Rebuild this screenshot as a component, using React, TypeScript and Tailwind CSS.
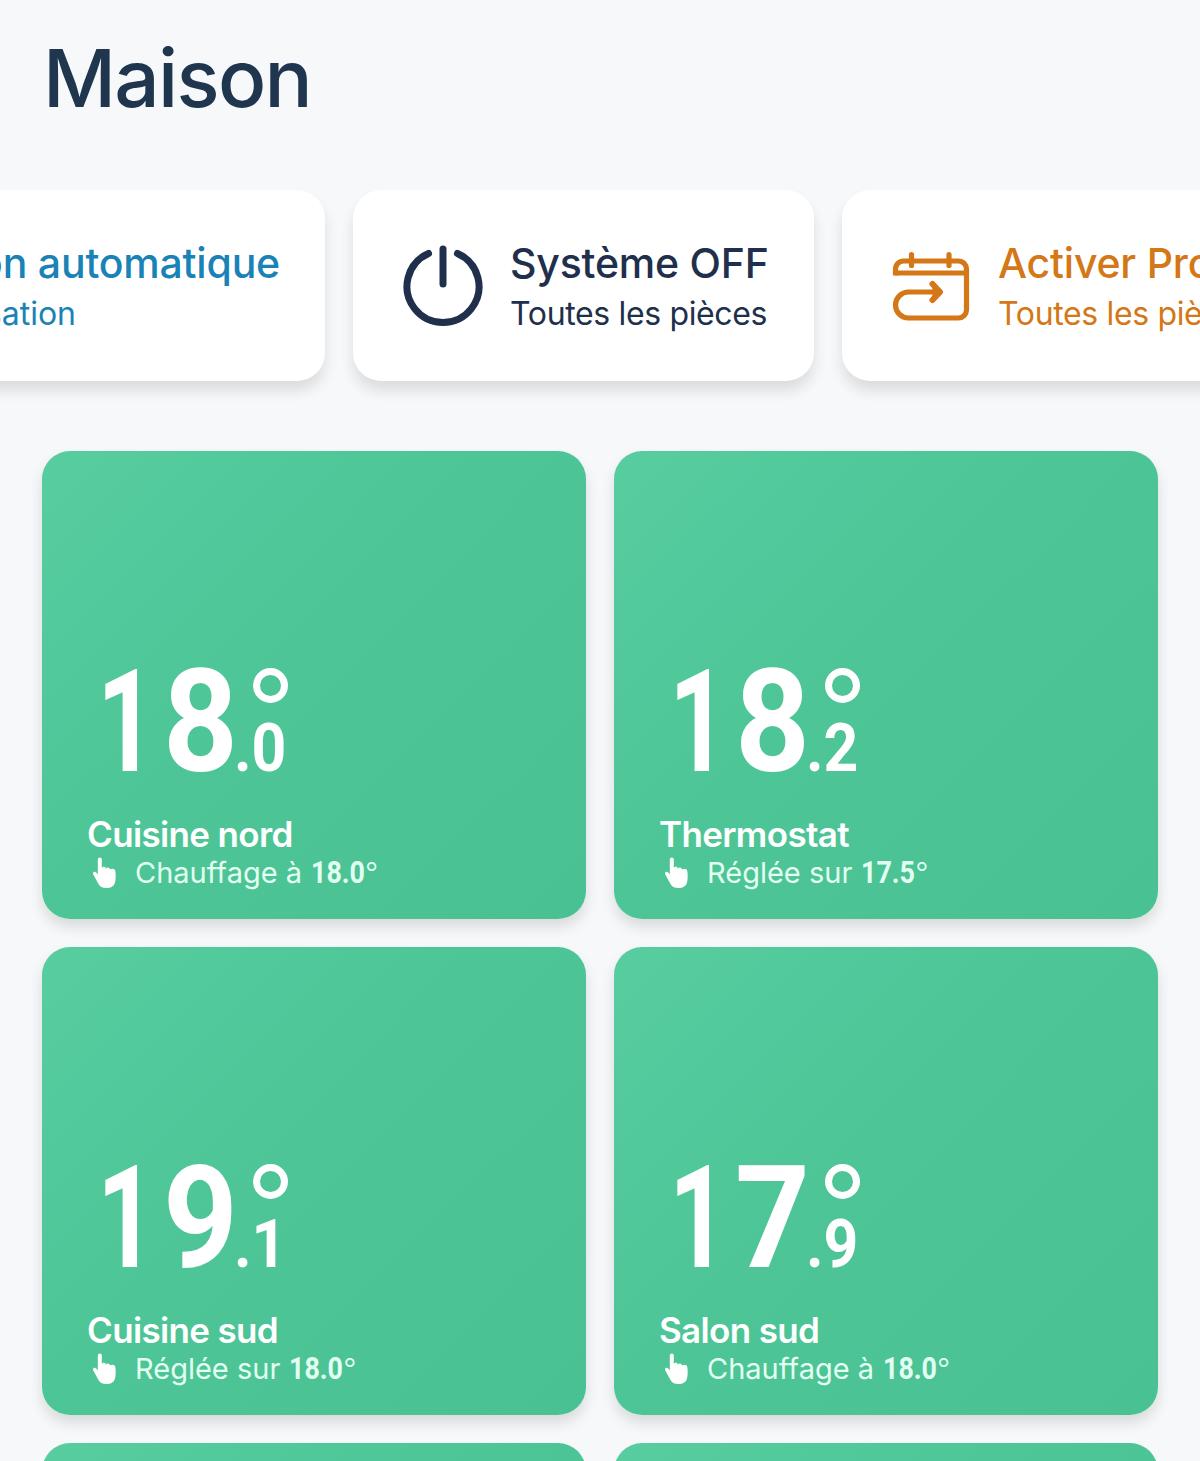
import type { ReactNode } from "react";

interface Room {
  name: string;
  whole: string;
  tenth: string;
  status: string;
  target: string;
}

const rooms: Room[] = [
  { name: "Cuisine nord", whole: "18", tenth: "0", status: "Chauffage à", target: "18.0" },
  { name: "Thermostat", whole: "18", tenth: "2", status: "Réglée sur", target: "17.5" },
  { name: "Cuisine sud", whole: "19", tenth: "1", status: "Réglée sur", target: "18.0" },
  { name: "Salon sud", whole: "17", tenth: "9", status: "Chauffage à", target: "18.0" },
];

const tile = "h-[468px] rounded-[28px] bg-linear-[135deg] from-[#57cda0] via-[#4dc597] via-45% to-[#49c193]";

function PowerIcon() {
  return (
    <svg width="80" height="82" viewBox="0 0 80 82" fill="none" stroke="currentColor" strokeWidth="7" strokeLinecap="round">
      <path d="M40 4v35" />
      <path d="M25.500 8.500a36 36 0 1 0 29 0" />
    </svg>
  );
}

function ScheduleIcon() {
  return (
    <svg width="78" height="70" viewBox="0 0 78 70" fill="none" stroke="currentColor" strokeWidth="5.2">
      <path d="M3.500 24.500V18a8 8 0 0 1 8-8h55a8 8 0 0 1 8 8v41a8 8 0 0 1-8 8H16.500a13 13 0 0 1 0-26H48" />
      <path d="M3 22h72" />
      <path d="M19.500 3.500v11M57 3.500v11" strokeLinecap="round" />
      <path d="M40.500 33l7.500 8-7.500 8" fill="currentColor" strokeWidth="6" strokeLinecap="round" strokeLinejoin="round" />
    </svg>
  );
}

function HandIcon() {
  return (
    <svg width="25" height="32" viewBox="0 0 25 32" fill="currentColor">
      <path d="M5.800 2.700c0-2.900 4-2.900 4 0v8.500c.8-2 3.900-1.700 4.100.5 1-1.800 4-1.300 4.200.9 1.500-1.700 5-1 5.200 1.300.5 3.500.6 7.500-.2 11C22.200 29 19 31 14.500 31c-4.300 0-6.800-1.600-8.300-4.600L1.300 17.500c-1.200-2.300 1.400-3.600 2.900-2l1.600 1.800z" />
    </svg>
  );
}

interface ActionCardProps {
  title: string;
  subtitle: string;
  className: string;
  subtitleClassName?: string;
  icon?: ReactNode;
}

function ActionCard({ title, subtitle, className, subtitleClassName = "tracking-[-0.35px]", icon }: ActionCardProps) {
  return (
    <div
      className={`flex h-[191px] shrink-0 items-center rounded-[28px] bg-white shadow-[0_10px_14px_rgba(0,0,0,0.11)] ${className}`}
    >
      {icon}
      <div className="whitespace-nowrap pt-[5px]">
        <p className="text-[41px] font-[450] leading-[51px] tracking-[-0.2px]">{title}</p>
        <p className={`text-[32px] leading-[50px] ${subtitleClassName}`}>{subtitle}</p>
      </div>
    </div>
  );
}

function RoomCard({ room }: { room: Room }) {
  return (
    <div className={`flex flex-col pl-[45px] text-white shadow-[0_8px_14px_rgba(0,0,0,0.12)] ${tile}`}>
      <div className="mt-[217px] flex h-[104px] pl-[10px] font-[Roboto,sans-serif]">
        <div className="flex w-[137px] text-[142px] font-bold leading-[109px]">
          <span className="w-[66px] origin-left scale-x-[0.72]">{room.whole[0]}</span>
          <span className="origin-left scale-x-[0.92]">{room.whole[1]}</span>
        </div>
        <div>
          <div className="ml-[19px] size-[35px] rounded-full border-[7px] border-white" />
          <div className="mt-[17px] origin-left scale-x-[0.92] text-[66px] font-bold leading-[58px]">
            .{room.tenth}
          </div>
        </div>
      </div>
      <h2 className="mt-[40px] text-[35px] font-semibold leading-[44px] tracking-[-0.65px]">{room.name}</h2>
      <div className="flex h-[34px] items-center pl-[5px]">
        <HandIcon />
        <p className="ml-[18px] flex whitespace-nowrap text-[29px] leading-[34px] text-[#e2fff1]">
          <span>{room.status}</span>
          <span className="ml-[9px] w-[54px] origin-left scale-x-[0.88] font-[Roboto,sans-serif] text-[30.5px] font-bold">
            {room.target}
          </span>
          <span className="font-light">°</span>
        </p>
      </div>
    </div>
  );
}

export default function App() {
  return (
    <div className="h-[1461px] w-[1200px] overflow-hidden bg-[#f6f8fa] font-[Inter,sans-serif] text-[#20364f]">
      <h1 className="h-[190px] pl-[43px] pt-[28px] text-[80px] font-[450] leading-[100px] tracking-[-1.7px]">
        Maison
      </h1>

      <div className="flex gap-[28px]">
        <ActionCard
          title="Activation automatique"
          subtitle="Géolocalisation"
          subtitleClassName="pl-[12px]"
          className="-ml-[321px] w-[646px] justify-end pr-[45px] text-[#1982b6]"
        />
        <ActionCard
          title="Système OFF"
          subtitle="Toutes les pièces"
          className="w-[461px] gap-[27px] pl-[50px] text-[#20304c]"
          icon={<PowerIcon />}
        />
        <ActionCard
          title="Activer Programme"
          subtitle="Toutes les pièces"
          className="w-[600px] gap-[28px] pl-[50px] text-[#d47717]"
          icon={<ScheduleIcon />}
        />
      </div>

      <div className="mt-[70px] grid grid-cols-2 gap-[28px] px-[42px]">
        {rooms.map((room) => (
          <RoomCard key={room.name} room={room} />
        ))}
        <div className={tile} />
        <div className={tile} />
      </div>
    </div>
  );
}
